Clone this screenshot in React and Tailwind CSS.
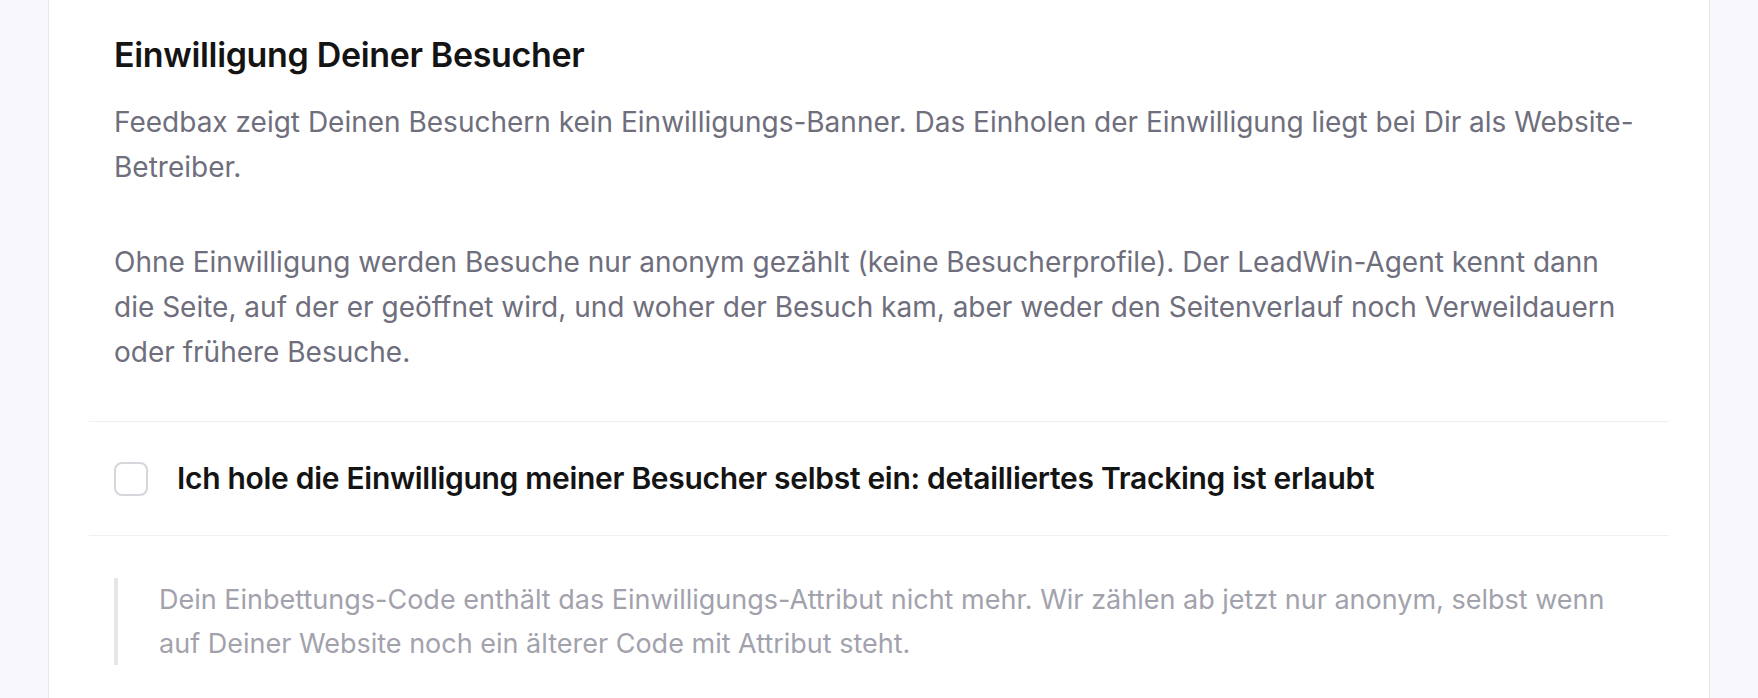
import React, { useState } from 'react';

const ConsentSettings = () => {
  const [allowTracking, setAllowTracking] = useState(false);

  return (
    <div className="min-h-[698px] bg-[#f8f8fc] flex px-[48px] font-[Inter,sans-serif]">
      <div className="flex-1 bg-white border-x border-[#e8e8ef] px-[40px]">
        {/* Intro */}
        <div className="px-[25px] pt-[33px] pb-[46px]">
          <h2 className="text-[34px] leading-[44px] font-semibold text-[#141414] tracking-[-0.01em]">
            Einwilligung Deiner Besucher
          </h2>
          <p className="mt-[23px] text-[28px] leading-[45px] text-[#6e6e7c]">
            Feedbax zeigt Deinen Besuchern kein Einwilligungs-Banner. Das Einholen der Einwilligung liegt bei Dir als Website-Betreiber.
          </p>
          <p className="mt-[50px] text-[28px] leading-[45px] text-[#6e6e7c]">
            Ohne Einwilligung werden Besuche nur anonym gezählt (keine Besucherprofile). Der LeadWin-Agent kennt dann die Seite, auf der er geöffnet wird, und woher der Besuch kam, aber weder den Seitenverlauf noch Verweildauern oder frühere Besuche.
          </p>
        </div>

        {/* Checkbox row */}
        <label className="flex items-center gap-[29px] px-[25px] py-[38px] border-y border-[#f0f0f3] cursor-pointer">
          <input
            type="checkbox"
            checked={allowTracking}
            onChange={(e) => setAllowTracking(e.target.checked)}
            className="appearance-none w-[34px] h-[34px] shrink-0 rounded-[8px] border-2 border-[#d6d6dc] bg-white checked:bg-[#141414]"
          />
          <span className="text-[30px] leading-[37px] font-semibold text-[#141414] tracking-[-0.01em]">
            Ich hole die Einwilligung meiner Besucher selbst ein: detailliertes Tracking ist erlaubt
          </span>
        </label>

        {/* Notice */}
        <div className="px-[25px] pt-[42px] pb-[40px]">
          <blockquote className="border-l-4 border-[#e6e6ea] pl-[41px] text-[27px] leading-[43.5px] text-[#a2a2ad]">
            Dein Einbettungs-Code enthält das Einwilligungs-Attribut nicht mehr. Wir zählen ab jetzt nur anonym, selbst wenn auf Deiner Website noch ein älterer Code mit Attribut steht.
          </blockquote>
        </div>
      </div>
    </div>
  );
};

export default function App() {
  return <ConsentSettings />;
}
